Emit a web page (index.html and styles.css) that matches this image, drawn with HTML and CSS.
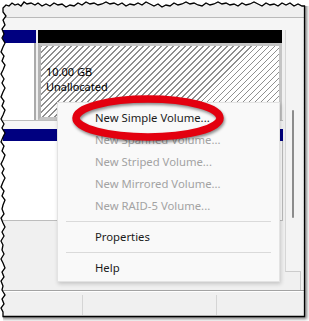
FILE: index.html
```html
<!DOCTYPE html>
<html>
<head>
<meta charset="utf-8">
<link rel="stylesheet" href="styles.css">
</head>
<body>
<div class="shot">
  <div class="window">
    <div class="topstrip"></div>
    <div class="band"></div>
    <div class="main">
      <div class="disks">
        <div class="row1">
          <div class="label"><div class="hdr navy"></div><div class="lbody"></div></div>
          <div class="part">
            <div class="hdr black"></div>
            <div class="hatch"><div>10.00 GB</div><div>Unallocated</div></div>
          </div>
        </div>
        <div class="rowgap"></div>
        <div class="row2"><div class="hdr2 navy"></div><div class="body2"></div></div>
        <div class="fill"></div>
      </div>
      <div class="side">
        <div class="vscroll"><div class="thumb"></div></div>
        <div class="corner"></div>
      </div>
    </div>
    <div class="status"><div class="cell c1"></div><div class="cell c2"></div><div class="cell c3"></div></div>
  </div>

  <svg class="edge" width="309" height="321" viewBox="0 0 309 321">
    <path class="mask" d="M0,0 H309 V6 H304 L302,6 298,4 294,6 290,3 286,5 282,3 278,6 274,4 270,5 266,3 262,6 258,4 254,2 250,4 246,5 242,3 238,6 234,4 230,5 226,3 222,4 218,2 214,4 210,5 206,3 202,6 198,5 194,3 190,4 186,2 182,4 178,5 174,3 170,6 166,5 162,7 158,4 154,6 150,4 146,2 142,5 138,3 134,5 130,4 126,6 122,3 118,5 114,3 110,4 106,2 102,4 98,5 94,3 90,4 86,2 82,5 78,3 74,6 70,5 66,7 62,4 58,5 54,3 50,6 46,4 42,6 38,3 35,5 31,3 27,4 24,2 21,6 18,4 15,5 12,3 9,6 6,5 3,8 3,12 6,16 3,20 5,25 2,29 4,34 2,38 5,43 3,47 1,52 4,56 2,61 5,65 3,70 1,74 4,79 2,83 5,88 3,92 1,97 4,101 2,106 5,110 3,115 1,119 4,124 2,128 5,133 3,137 1,142 4,146 2,151 5,155 3,160 1,164 4,169 2,173 5,178 3,182 1,187 4,191 2,196 5,200 3,205 2,209 4,214 1,218 3,223 5,227 2,232 4,236 1,241 3,245 2,250 4,254 1,259 3,263 5,268 2,272 4,277 1,281 3,286 2,290 5,295 2,299 4,304 1,308 3,312 3,317 L3,321 H0 Z"/>
    <polygon class="outline" points="304.5,316.5 304.5,6 302,6 298,4 294,6 290,3 286,5 282,3 278,6 274,4 270,5 266,3 262,6 258,4 254,2 250,4 246,5 242,3 238,6 234,4 230,5 226,3 222,4 218,2 214,4 210,5 206,3 202,6 198,5 194,3 190,4 186,2 182,4 178,5 174,3 170,6 166,5 162,7 158,4 154,6 150,4 146,2 142,5 138,3 134,5 130,4 126,6 122,3 118,5 114,3 110,4 106,2 102,4 98,5 94,3 90,4 86,2 82,5 78,3 74,6 70,5 66,7 62,4 58,5 54,3 50,6 46,4 42,6 38,3 35,5 31,3 27,4 24,2 21,6 18,4 15,5 12,3 9,6 6,5 3,8 3,12 6,16 3,20 5,25 2,29 4,34 2,38 5,43 3,47 1,52 4,56 2,61 5,65 3,70 1,74 4,79 2,83 5,88 3,92 1,97 4,101 2,106 5,110 3,115 1,119 4,124 2,128 5,133 3,137 1,142 4,146 2,151 5,155 3,160 1,164 4,169 2,173 5,178 3,182 1,187 4,191 2,196 5,200 3,205 2,209 4,214 1,218 3,223 5,227 2,232 4,236 1,241 3,245 2,250 4,254 1,259 3,263 5,268 2,272 4,277 1,281 3,286 2,290 5,295 2,299 4,304 1,308 3,312 3,316.5"/>
  </svg>

  <div class="menu">
    <div class="item">New Simple Volume...</div>
    <div class="item dis">New Spanned Volume...</div>
    <div class="item dis">New Striped Volume...</div>
    <div class="item dis">New Mirrored Volume...</div>
    <div class="item dis">New RAID-5 Volume...</div>
    <div class="sep"></div>
    <div class="item">Properties</div>
    <div class="sep"></div>
    <div class="item">Help</div>
  </div>

  <svg class="ring" width="309" height="321" viewBox="0 0 309 321">
    <ellipse cx="148" cy="118" rx="72" ry="19"/>
  </svg>
</div>
</body>
</html>
```

FILE: styles.css
```css
* { box-sizing: border-box; }
html, body { margin: 0; background: #fff; }
body { font-family: "Noto Sans", "DejaVu Sans", sans-serif; }

.shot { position: relative; width: 309px; height: 321px; overflow: hidden; }

.window {
  width: 305px; height: 317px;
  background: #f0f0f0;
  display: flex; flex-direction: column;
  box-shadow: 2px 2px 3px rgba(0,0,0,.5);
}
.topstrip { height: 18px; flex: none; background: #efefef; border-bottom: 1px solid #b9b9b9; }
.band { height: 12px; flex: none; background: #f5f5f5; }
.main { height: 260px; flex: none; display: flex; }

.disks { width: 283px; padding-left: 3px; display: flex; flex-direction: column; }
.row1 { height: 90px; flex: none; display: flex; gap: 2px; }
.label { width: 33px; display: flex; flex-direction: column; }
.hdr { height: 13px; flex: none; }
.navy { background: #000080; }
.black { background: #000; }
.lbody { flex: 1; background: #fff; border-right: 2px solid #aaa; }
.part { flex: 1; display: flex; flex-direction: column; margin-right: 1px; }
.hatch {
  flex: 1;
  border: 3px solid #c4c4c4;
  border-left-color: #b3b3b3;
  background: #fff repeating-linear-gradient(135deg, #8f8f8f 0 0.8px, transparent 0.8px 4.24px);
  padding: 18px 0 0 5px;
  font-size: 11px; line-height: 15px; color: #000;
}
.rowgap { height: 9px; flex: none; border-top: 1px solid #bdbdbd; background: #f7f7f7; }
.row2 { height: 92px; flex: none; display: flex; flex-direction: column; }
.hdr2 { height: 12px; flex: none; }
.body2 { flex: 1; background: #fff; border-right: 1px solid #bdbdbd; border-bottom: 1px solid #bdbdbd; }
.fill { flex: 1; }

.side { flex: 1; display: flex; flex-direction: column; }
.vscroll {
  height: 242px; flex: none; width: 16px; margin-left: 2px;
  background: #f3f3f3;
  border-left: 1px solid #d6d6d6;
  border-bottom: 1px solid #cccccc;
  padding: 80px 0 0 6px;
}
.thumb { width: 2px; height: 108px; background: #8b8b8b; border-radius: 1px; }
.corner { height: 18px; flex: none; width: 16px; margin-left: 2px; border-right: 1px solid #c8c8c8; }

.status {
  height: 27px; flex: none;
  display: flex;
  border-top: 1px solid #a3a3a3;
  box-shadow: inset 0 1px #fff;
  padding: 4px 0 2px;
}
.cell { border-right: 1px solid #d5d5d5; }
.c1 { width: 83px; }
.c2 { width: 134px; }
.c3 { flex: 1; border-right: 0; }

.edge { position: absolute; left: 0; top: 0; }
.edge .mask { fill: #fff; }
.edge .outline { fill: none; stroke: #000; stroke-width: 1.3; stroke-linejoin: miter; }

.menu {
  position: absolute; left: 57px; top: 102px; width: 223px;
  background: #f9f9f9;
  border: 1px solid #e3e3e3;
  box-shadow: 1px 2px 4px rgba(0,0,0,.18);
  padding: 4px 0 2px;
  font-size: 11.3px;
}
.item { height: 22px; line-height: 22px; padding-left: 37px; color: #1b1b1b; white-space: nowrap; }
.dis { color: #a3a3a3; }
.sep { height: 9px; display: flex; align-items: center; padding: 0 8px; }
.sep::before { content: ""; flex: 1; height: 1px; background: #dadada; }

.ring { position: absolute; left: 0; top: 0; filter: drop-shadow(1px 2px 1.5px rgba(0,0,0,.45)); }
.ring ellipse { fill: none; stroke: #e3000f; stroke-width: 7.5; }
```
